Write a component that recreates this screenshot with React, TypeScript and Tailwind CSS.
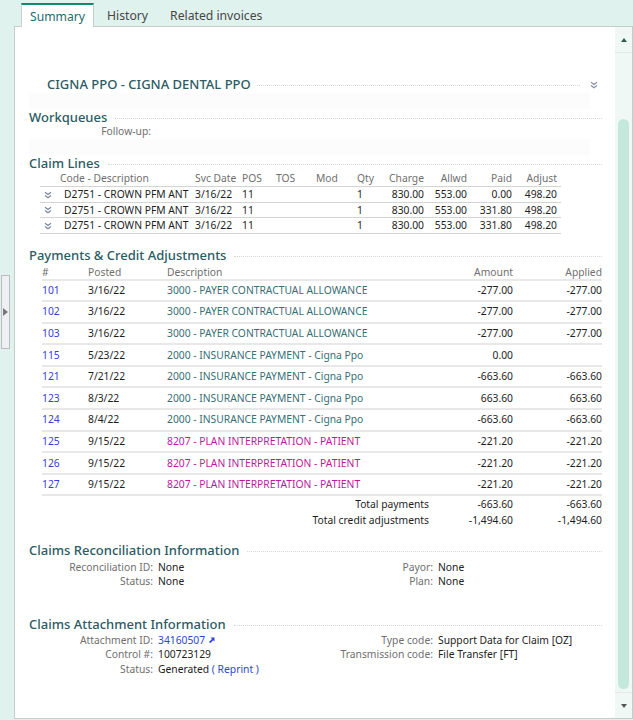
import React from "react";

type ClaimLine = {
  code: string;
  svcDate: string;
  pos: string;
  qty: string;
  charge: string;
  allwd: string;
  paid: string;
  adjust: string;
};

type Payment = {
  id: string;
  posted: string;
  description: string;
  kind: "adj" | "pay" | "patient";
  amount: string;
  applied: string;
};

const claimLines: ClaimLine[] = [
  { code: "D2751 - CROWN PFM ANT", svcDate: "3/16/22", pos: "11", qty: "1", charge: "830.00", allwd: "553.00", paid: "0.00", adjust: "498.20" },
  { code: "D2751 - CROWN PFM ANT", svcDate: "3/16/22", pos: "11", qty: "1", charge: "830.00", allwd: "553.00", paid: "331.80", adjust: "498.20" },
  { code: "D2751 - CROWN PFM ANT", svcDate: "3/16/22", pos: "11", qty: "1", charge: "830.00", allwd: "553.00", paid: "331.80", adjust: "498.20" },
];

const payments: Payment[] = [
  { id: "101", posted: "3/16/22", description: "3000 - PAYER CONTRACTUAL ALLOWANCE", kind: "adj", amount: "-277.00", applied: "-277.00" },
  { id: "102", posted: "3/16/22", description: "3000 - PAYER CONTRACTUAL ALLOWANCE", kind: "adj", amount: "-277.00", applied: "-277.00" },
  { id: "103", posted: "3/16/22", description: "3000 - PAYER CONTRACTUAL ALLOWANCE", kind: "adj", amount: "-277.00", applied: "-277.00" },
  { id: "115", posted: "5/23/22", description: "2000 - INSURANCE PAYMENT - Cigna Ppo", kind: "pay", amount: "0.00", applied: "" },
  { id: "121", posted: "7/21/22", description: "2000 - INSURANCE PAYMENT - Cigna Ppo", kind: "pay", amount: "-663.60", applied: "-663.60" },
  { id: "123", posted: "8/3/22", description: "2000 - INSURANCE PAYMENT - Cigna Ppo", kind: "pay", amount: "663.60", applied: "663.60" },
  { id: "124", posted: "8/4/22", description: "2000 - INSURANCE PAYMENT - Cigna Ppo", kind: "pay", amount: "-663.60", applied: "-663.60" },
  { id: "125", posted: "9/15/22", description: "8207 - PLAN INTERPRETATION - PATIENT", kind: "patient", amount: "-221.20", applied: "-221.20" },
  { id: "126", posted: "9/15/22", description: "8207 - PLAN INTERPRETATION - PATIENT", kind: "patient", amount: "-221.20", applied: "-221.20" },
  { id: "127", posted: "9/15/22", description: "8207 - PLAN INTERPRETATION - PATIENT", kind: "patient", amount: "-221.20", applied: "-221.20" },
];

const DoubleChevron = ({ color = "#7d899b" }: { color?: string }) => (
  <svg width="8" height="8" viewBox="0 0 8 8" fill="none">
    <path d="M1 1.2l3 2.3 3-2.3M1 4.5l3 2.3 3-2.3" stroke={color} strokeWidth="1.3" />
  </svg>
);

const SectionHeading = ({ title }: { title: string }) => (
  <div className="flex h-[16px] items-center gap-2">
    <span className="text-[13px] font-medium leading-[16px] text-[#2b5b63]">{title}</span>
    <div className="mt-[3px] flex-1 border-t border-dotted border-[#d6d6d6]" />
  </div>
);

const InfoRow = ({
  label,
  value,
  label2,
  value2,
}: {
  label: string;
  value: React.ReactNode;
  label2?: string;
  value2?: React.ReactNode;
}) => (
  <div className="flex h-[14.5px] items-center whitespace-nowrap text-[10.3px] leading-[14px]">
    <span className="w-[124px] text-right text-[#6f6f6f]">{label}</span>
    <span className="ml-[5px] w-[145px] text-[#222]">{value}</span>
    <span className="w-[130px] text-right text-[#6f6f6f]">{label2}</span>
    <span className="ml-[5px] text-[#222]">{value2}</span>
  </div>
);

const descColor = {
  adj: "text-[#376f74]",
  pay: "text-[#376f74]",
  patient: "text-[#bb1a9c]",
};

export default function App() {
  return (
    <div
      className="flex h-[720px] w-[633px] flex-col overflow-hidden bg-[#e0f2ee]"
      style={{ fontFamily: '"Noto Sans", "Open Sans", sans-serif' }}
    >
      {/* tabs */}
      <div className="flex h-[26px] items-end pl-[21px] text-[12.2px]">
        <div className="relative z-10 -mb-px flex h-[24px] w-[73px] items-center justify-center border-x border-t-2 border-x-[#c9cfcd] border-t-[#0f8a6b] bg-white pt-[3px] text-[#276a6c]">
          Summary
        </div>
        <div className="flex h-[23px] items-center pl-[13px] pt-[4px] text-[#474747]">History</div>
        <div className="flex h-[23px] items-center pl-[22px] pt-[4px] text-[#474747]">Related invoices</div>
      </div>

      <div className="flex flex-1 pb-[1px]">
        {/* collapse handle */}
        <div className="flex w-[14px] items-start pt-[249px]">
          <div className="ml-[1px] flex h-[74px] w-[9px] items-center justify-center border border-[#bcbcbc] bg-[#eef0f3]">
            <svg width="5" height="8" viewBox="0 0 5 8">
              <path d="M0 0l5 4-5 4z" fill="#777" />
            </svg>
          </div>
        </div>

        {/* panel */}
        <div className="flex flex-1 border border-[#c8cccb] bg-white">
          <div className="flex-1 pl-[14px] pr-[13px] pt-[49px]">
            {/* payer header */}
            <div className="flex h-[17px] items-center pl-[18px]">
              <span className="text-[13px] font-medium leading-[17px] text-[#2b5b63]">CIGNA PPO - CIGNA DENTAL PPO</span>
              <div className="ml-[6px] mt-[2px] flex-1 border-t border-dotted border-[#d6d6d6]" />
              <div className="ml-[10px] mr-[4px] flex w-[8px] items-center">
                <DoubleChevron color="#8893a5" />
              </div>
            </div>
            <div className="mr-[12px] h-[16px] bg-[#fcfcfc]" />

            <SectionHeading title="Workqueues" />
            <div className="flex h-[14px] items-center text-[10.3px]">
              <span className="w-[122px] text-right text-[#6f6f6f]">Follow-up:</span>
            </div>
            <div className="mr-[12px] h-[16px] bg-[#fcfcfc]" />

            <SectionHeading title="Claim Lines" />
            <div className="ml-[11px] w-[521px] text-[10.3px]">
              <div className="grid h-[16px] grid-cols-[20px_135px_47px_34px_40px_41px_20px_47px_43px_45px_45px_4px] items-center border-b border-[#d4d4d4] leading-[15px] text-[#6f6f6f]">
                <span />
                <span>Code - Description</span>
                <span>Svc Date</span>
                <span>POS</span>
                <span>TOS</span>
                <span>Mod</span>
                <span>Qty</span>
                <span className="text-right">Charge</span>
                <span className="text-right">Allwd</span>
                <span className="text-right">Paid</span>
                <span className="text-right">Adjust</span>
                <span />
              </div>
              {claimLines.map((line, idx) => (
                <div
                  key={`claim-${idx}`}
                  className="grid h-[15.5px] grid-cols-[20px_135px_47px_34px_40px_41px_20px_47px_43px_45px_45px_4px] items-center border-b border-[#d4d4d4] leading-[15px] text-[#1e1e1e]"
                >
                  <span className="flex pl-[4px]">
                    <DoubleChevron />
                  </span>
                  <span className="whitespace-nowrap pl-[4px]">{line.code}</span>
                  <span>{line.svcDate}</span>
                  <span>{line.pos}</span>
                  <span />
                  <span />
                  <span>{line.qty}</span>
                  <span className="text-right">{line.charge}</span>
                  <span className="text-right">{line.allwd}</span>
                  <span className="text-right">{line.paid}</span>
                  <span className="text-right">{line.adjust}</span>
                  <span />
                </div>
              ))}
            </div>

            <div className="mt-[13px]">
              <SectionHeading title="Payments & Credit Adjustments" />
            </div>
            <div className="ml-[13px] text-[10.3px]">
              <div className="grid h-[18px] grid-cols-[46px_79px_1fr_84px_89px] items-center border-b-2 border-[#e8e8e8] pt-[2px] leading-[15px] text-[#6f6f6f]">
                <span>#</span>
                <span>Posted</span>
                <span>Description</span>
                <span className="text-right">Amount</span>
                <span className="text-right">Applied</span>
              </div>
              {payments.map((p) => (
                <div
                  key={`pay-${p.id}`}
                  className="grid h-[21.6px] grid-cols-[46px_79px_1fr_84px_89px] items-center border-b-2 border-[#e8e8e8] leading-[15px]"
                >
                  <span className="text-[#3740d6]">{p.id}</span>
                  <span className="text-[#1e1e1e]">{p.posted}</span>
                  <span className={`whitespace-nowrap ${descColor[p.kind]}`}>{p.description}</span>
                  <span className="text-right text-[#1e1e1e]">{p.amount}</span>
                  <span className="text-right text-[#1e1e1e]">{p.applied}</span>
                </div>
              ))}
              <div className="grid h-[16px] grid-cols-[1fr_84px_89px] items-center leading-[15px] text-[#1e1e1e]">
                <span className="text-right">Total payments</span>
                <span className="text-right">-663.60</span>
                <span className="text-right">-663.60</span>
              </div>
              <div className="grid h-[17px] grid-cols-[1fr_84px_89px] items-center leading-[15px] text-[#1e1e1e]">
                <span className="text-right">Total credit adjustments</span>
                <span className="text-right">-1,494.60</span>
                <span className="text-right">-1,494.60</span>
              </div>
            </div>

            <div className="mt-[13px]">
              <SectionHeading title="Claims Reconciliation Information" />
            </div>
            <div className="pt-[1px]">
              <InfoRow label="Reconciliation ID:" value="None" label2="Payor:" value2="None" />
              <InfoRow label="Status:" value="None" label2="Plan:" value2="None" />
            </div>

            <div className="mt-[28px]">
              <SectionHeading title="Claims Attachment Information" />
            </div>
            <div>
              <InfoRow
                label="Attachment ID:"
                value={
                  <span className="inline-flex items-center gap-[4px] text-[#2f45d6]">
                    34160507
                    <svg width="6" height="6" viewBox="0 0 6 6">
                      <path d="M1.5 0.5H5.5V4.5L4.2 3.2 1.2 6.2 0 5 3 2z" fill="#2f45d6" />
                    </svg>
                  </span>
                }
                label2="Type code:"
                value2="Support Data for Claim [OZ]"
              />
              <InfoRow label="Control #:" value="100723129" label2="Transmission code:" value2="File Transfer [FT]" />
              <InfoRow
                label="Status:"
                value={
                  <span>
                    Generated <span className="text-[#2f45d6]">( Reprint )</span>
                  </span>
                }
              />
            </div>
          </div>

          {/* scrollbar */}
          <div className="flex w-[17px] flex-col bg-[#eff8f5]">
            <div className="flex h-[26px] items-center justify-center border-b border-[#dfeae6]">
              <svg width="6" height="4" viewBox="0 0 6 4">
                <path d="M0 4L3 0l3 4z" fill="#2f5d50" />
              </svg>
            </div>
            <div className="flex-1 px-[3px] pb-[3px] pt-[66px]">
              <div className="h-full rounded-full bg-[#c5e8dc]" />
            </div>
            <div className="flex h-[26px] items-center justify-center border-t border-[#dfeae6]">
              <svg width="6" height="4" viewBox="0 0 6 4">
                <path d="M0 0h6L3 4z" fill="#555" />
              </svg>
            </div>
          </div>
        </div>
      </div>
    </div>
  );
}
